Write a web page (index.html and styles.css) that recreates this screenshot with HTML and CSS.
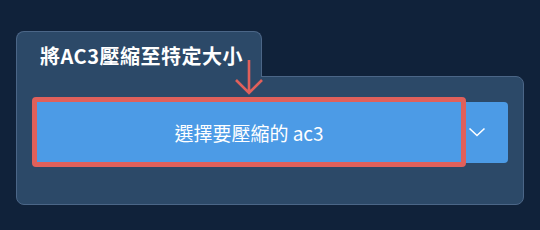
FILE: index.html
```html
<!DOCTYPE html>
<html lang="zh-Hant">
<head>
    <meta charset="UTF-8">
    <meta name="viewport" content="width=device-width, initial-scale=1.0">
    <title>將AC3壓縮至特定大小</title>
    <link rel="stylesheet" href="styles.css">
</head>
<body>

    <div id="page">
        <!-- Tab header -->
        <div id="panel-tab">
            <span id="panel-title">將AC3壓縮至特定大小</span>
        </div>

        <!-- Panel body with file picker -->
        <div id="panel-body">
            <div id="picker">
                <button id="picker-main" class="picker-button">選擇要壓縮的 ac3</button>
                <button id="picker-more" class="picker-button" aria-label="更多">
                    <svg width="18" height="12" viewBox="0 0 18 12">
                        <path d="M1.5 2.5 L9 9.5 L16.5 2.5" fill="none" stroke="#ffffff" stroke-width="1.6"/>
                    </svg>
                </button>
            </div>
        </div>

        <!-- Annotation arrow -->
        <svg id="hint-arrow" width="30" height="38" viewBox="0 0 30 38">
            <path d="M15 1 V34 M2 21 L15 34 L28 21" fill="none" stroke="#e0605b" stroke-width="2.6"/>
        </svg>
    </div>

</body>
</html>
```

FILE: styles.css
```css
/* Basic Reset */
body, html {
    margin: 0;
    padding: 0;
    height: 100%;
    overflow: hidden;
    background-color: #10223a;
    font-family: "Noto Sans CJK TC", "Noto Sans", sans-serif;
    color: #fff;
}

#page {
    position: relative;
    padding: 31px 0 0 16px;
}

/* --- Tab header --- */
#panel-tab {
    position: relative;
    z-index: 1;
    width: 246px;
    height: 46px;
    margin-bottom: -1px;
    padding: 11px 0 0 23px;
    box-sizing: border-box;
    background-color: #2c4968;
    border: 1px solid #4b6687;
    border-bottom: none;
    border-radius: 8px 8px 0 0;
}

#panel-title {
    display: block;
    font-size: 20px;
    font-weight: bold;
    line-height: 26px;
    letter-spacing: 0.5px;
}

/* --- Panel body --- */
#panel-body {
    width: 508px;
    padding: 20px 0 37px 15px;
    box-sizing: border-box;
    background-color: #2c4968;
    border: 1px solid #4b6687;
    border-radius: 0 8px 8px 8px;
}

#picker {
    display: flex;
    align-items: center;
}

.picker-button {
    background-color: #4c9be6;
    color: #fff;
    border: none;
    font-family: inherit;
    padding: 0;
    cursor: pointer;
}

#picker-main {
    width: 434px;
    height: 70px;
    border: 5px solid #e0605b;
    border-radius: 4px;
    font-size: 19px;
    font-weight: normal;
}

#picker-more {
    width: 42px;
    height: 61px;
    border-radius: 0 4px 4px 0;
    display: flex;
    align-items: center;
    padding-left: 2px;
}

#picker-more svg {
    display: block;
}

/* Annotation arrow over the tab edge */
#hint-arrow {
    position: absolute;
    left: 234px;
    top: 59px;
    z-index: 2;
}
```
